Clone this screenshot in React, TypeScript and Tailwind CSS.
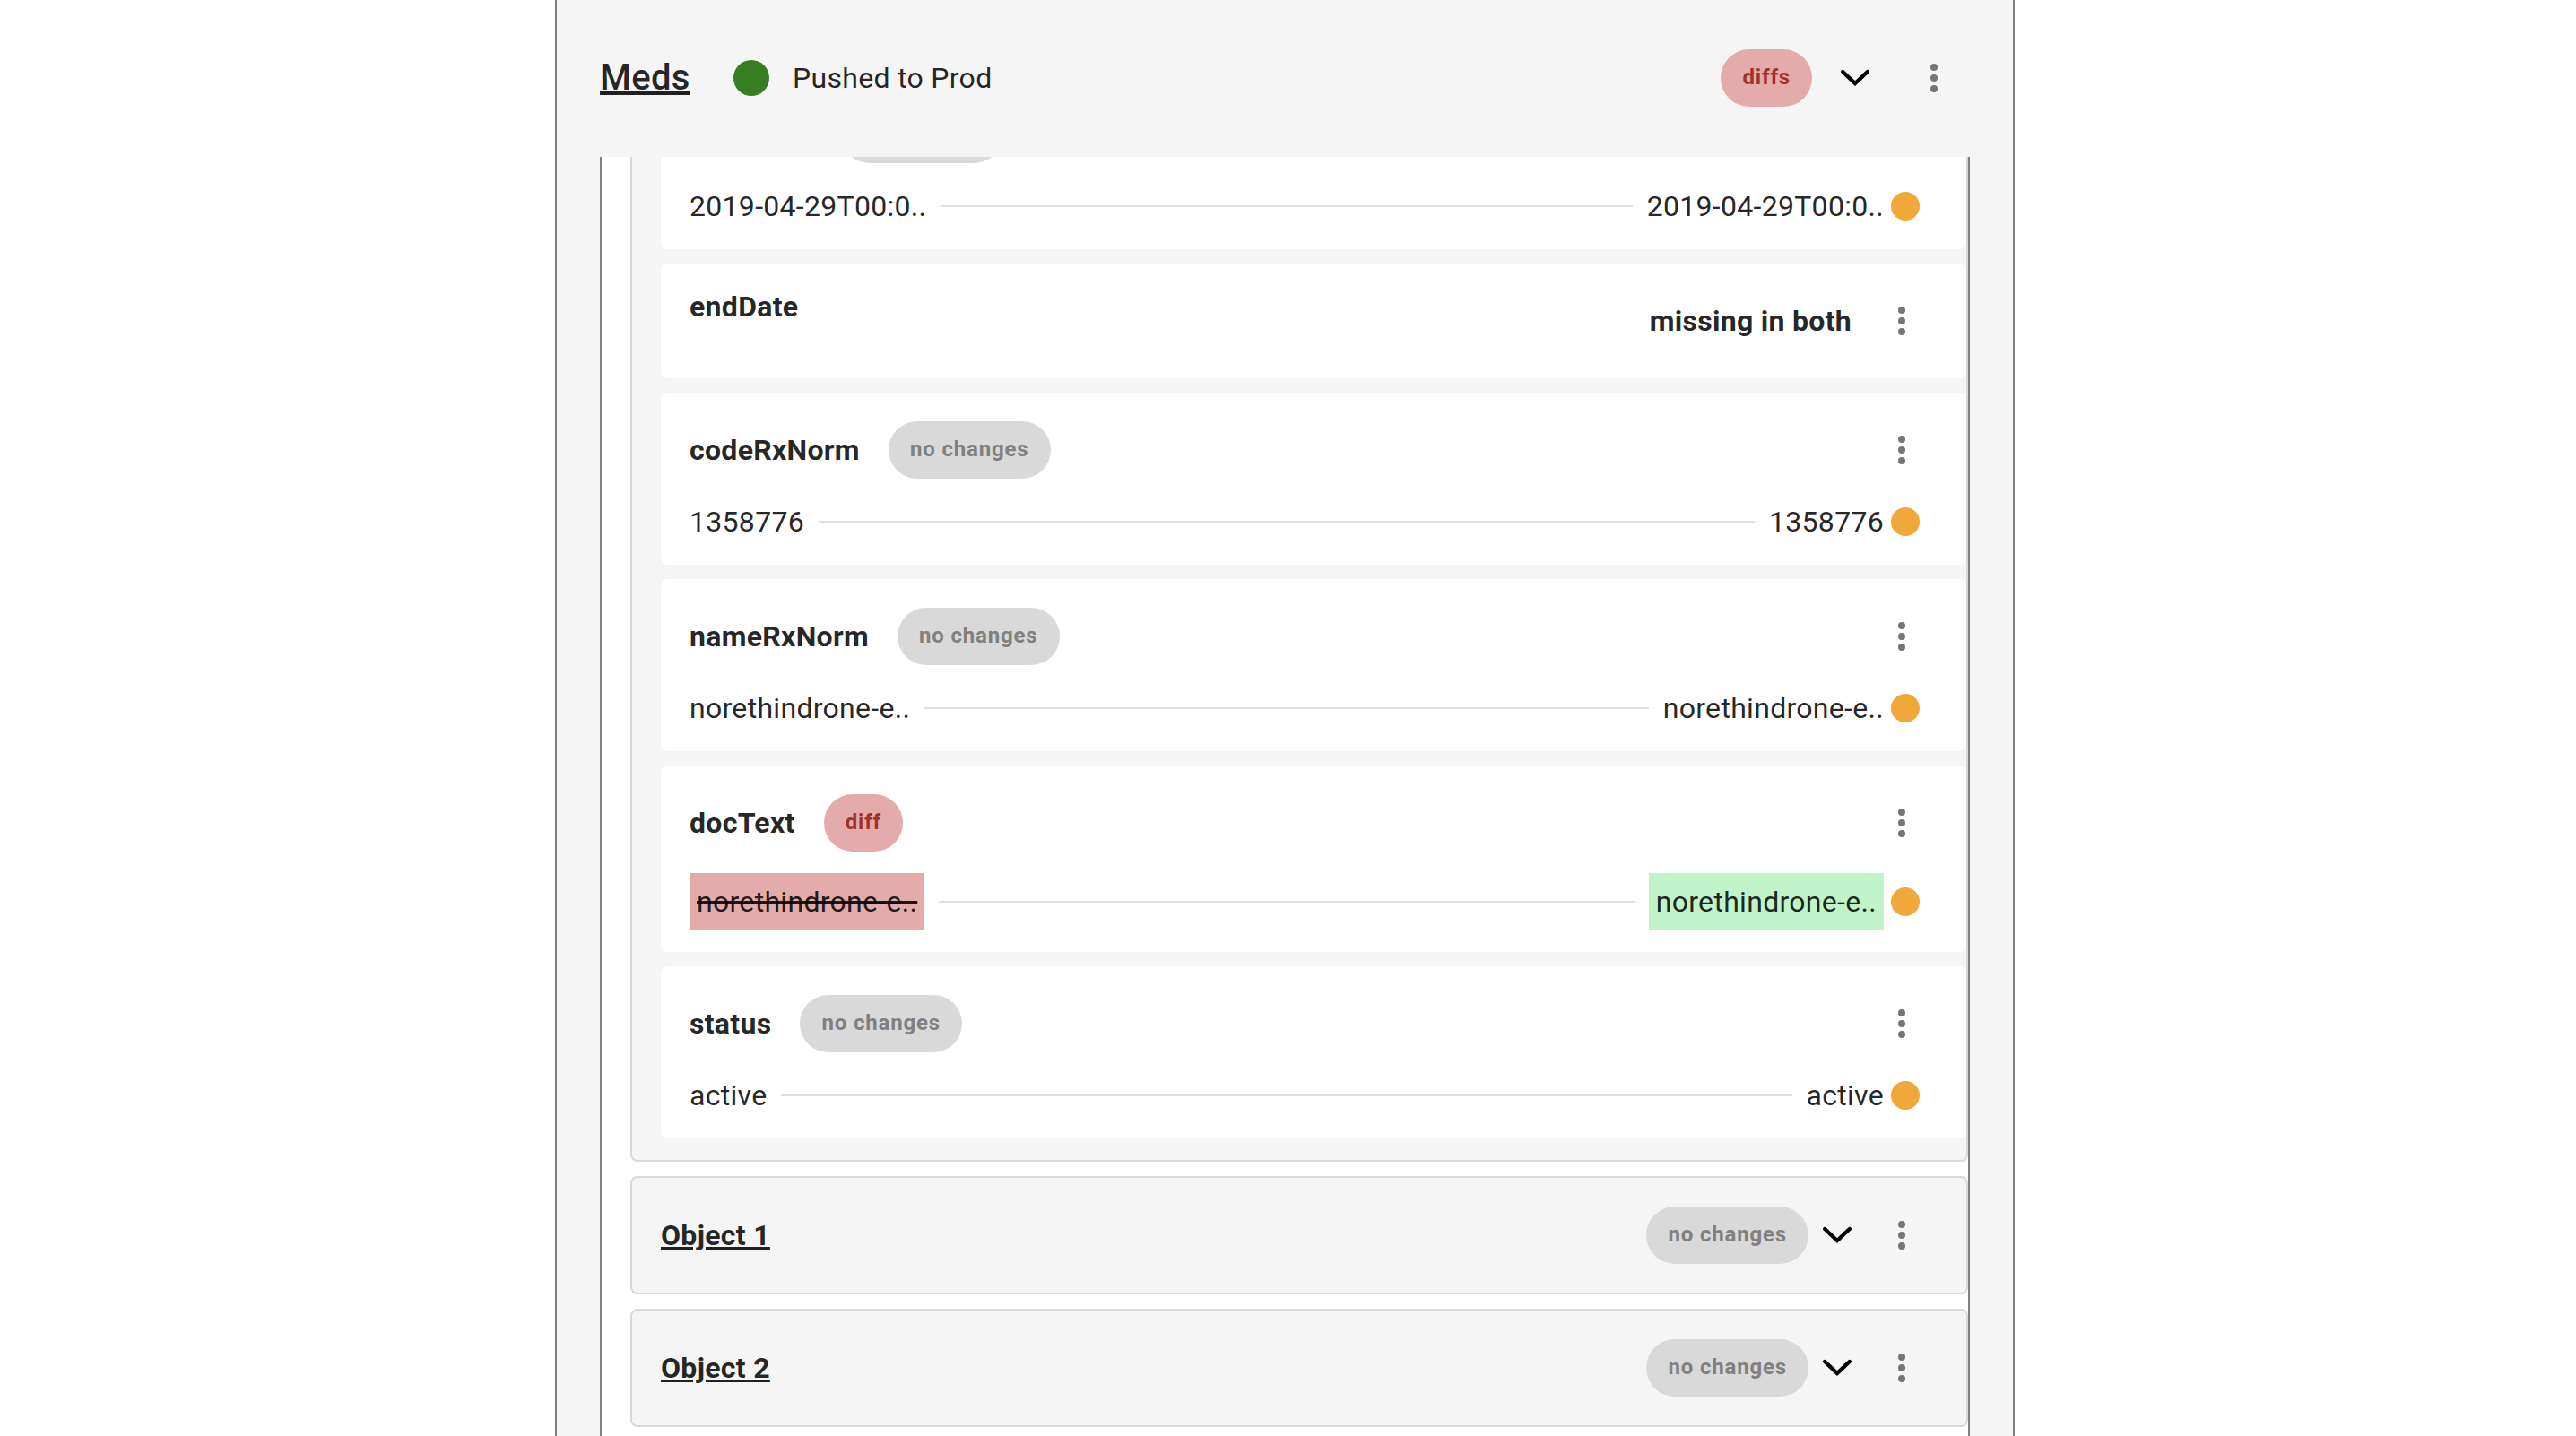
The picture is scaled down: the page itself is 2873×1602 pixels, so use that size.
const MoreIcon = () => (
  <div className="flex size-24 shrink-0 items-center justify-center text-[#757575]">
    <svg viewBox="0 0 24 24" className="size-12" fill="currentColor">
      <circle cx="12" cy="6" r="2" />
      <circle cx="12" cy="12" r="2" />
      <circle cx="12" cy="18" r="2" />
    </svg>
  </div>
);

const Chevron = () => (
  <svg viewBox="0 0 48 48" className="size-12 shrink-0" fill="none" stroke="#000" strokeWidth="4.4" strokeLinecap="round">
    <path d="M10.2 17 24 30 37.8 17" />
  </svg>
);

const Chip = ({ label, red }: { label: string; red?: boolean }) => (
  <div
    className={`flex h-16 shrink-0 items-center rounded-[32px] px-6 text-[24px] leading-none font-bold tracking-[0.84px] ${
      red ? "bg-[#e4abab] text-[#a3312d]" : "bg-[#d9d9d9] text-[#808080]"
    }`}
  >
    <span className="pb-0.5">{label}</span>
  </div>
);

type Field = { name: string; value: string; diff?: boolean };

const ValueRow = ({ value, diff }: { value: string; diff?: boolean }) => (
  <div className="mt-6 flex items-center pr-[52px]">
    <span className={diff ? "bg-[#e4abab] p-2 line-through" : ""}>{value}</span>
    <div className="mx-4 h-0.5 flex-1 bg-[#e0e0e0]" />
    <span className={diff ? "bg-[#c0f4c8] p-2" : ""}>{value}</span>
    <div className="ml-2 size-8 rounded-full bg-[#f0a83b]" />
  </div>
);

const FieldCard = ({ name, value, diff }: Field) => (
  <div className="rounded-lg bg-white pt-8 pb-6 pl-8">
    <div className="flex h-16 items-center pr-6">
      <span className="mr-8 font-bold">{name}</span>
      <Chip label={diff ? "diff" : "no changes"} red={diff} />
      <div className="ml-auto">
        <MoreIcon />
      </div>
    </div>
    <ValueRow value={value} diff={diff} />
  </div>
);

const ObjectRow = ({ name }: { name: string }) => (
  <div className="flex h-[132px] shrink-0 items-center rounded-lg border-2 border-[#d9d9d9] bg-[#f5f5f5] pr-6 pl-8">
    <span className="mr-auto font-bold underline decoration-[3px] underline-offset-[2px]">{name}</span>
    <Chip label="no changes" />
    <div className="ml-2">
      <Chevron />
    </div>
    <MoreIcon />
  </div>
);

const fields: Field[] = [
  { name: "codeRxNorm", value: "1358776" },
  { name: "nameRxNorm", value: "norethindrone-e.." },
  { name: "docText", value: "norethindrone-e..", diff: true },
  { name: "status", value: "active" },
];

export default function App() {
  return (
    <div className="h-[1602px] w-full overflow-hidden bg-white font-['Roboto',sans-serif] text-[32px] leading-[48px] tracking-[0.3px] text-black/87">
      <div className="ml-[619px] flex h-full w-[1628px] flex-col border-x-2 border-[#808080] bg-[#f5f5f5]">
        <header className="flex h-[175px] shrink-0 items-center pr-10 pb-px pl-12">
          <h1 className="w-[101px] text-[40px] font-medium underline decoration-[4px] underline-offset-[2px]">Meds</h1>
          <div className="ml-12 size-10 rounded-full bg-[#377d22]" />
          <span className="ml-[26px]">Pushed to Prod</span>
          <div className="ml-auto flex items-center">
            <Chip label="diffs" red />
            <div className="mr-4 ml-6">
              <Chevron />
            </div>
            <MoreIcon />
          </div>
        </header>
        <main className="mx-12 flex min-h-0 flex-1 flex-col overflow-hidden border-x-2 border-[#808080] bg-white pl-8">
          <div className="-mt-[113px] flex shrink-0 flex-col gap-4 rounded-lg border-2 border-[#d9d9d9] bg-[#f5f5f5] pt-[22px] pb-6 pl-8">
            {/* card scrolled under the header: only the chip's lower edge and the values show */}
            <div className="rounded-lg bg-white pt-8 pb-6 pl-8">
              <div className="ml-[169px] h-16 w-[180px] rounded-[32px] bg-[#d9d9d9]" />
              <ValueRow value="2019-04-29T00:0.." />
            </div>
            <div className="flex h-32 items-center rounded-lg bg-white pr-6 pl-8 font-bold">
              <span className="mt-6 self-start">endDate</span>
              <span className="mr-2 ml-auto">missing in both</span>
              <MoreIcon />
            </div>
            {fields.map((f) => (
              <FieldCard key={f.name} {...f} />
            ))}
          </div>
          <div className="mt-4 flex flex-col gap-4">
            <ObjectRow name="Object 1" />
            <ObjectRow name="Object 2" />
          </div>
        </main>
      </div>
    </div>
  );
}
